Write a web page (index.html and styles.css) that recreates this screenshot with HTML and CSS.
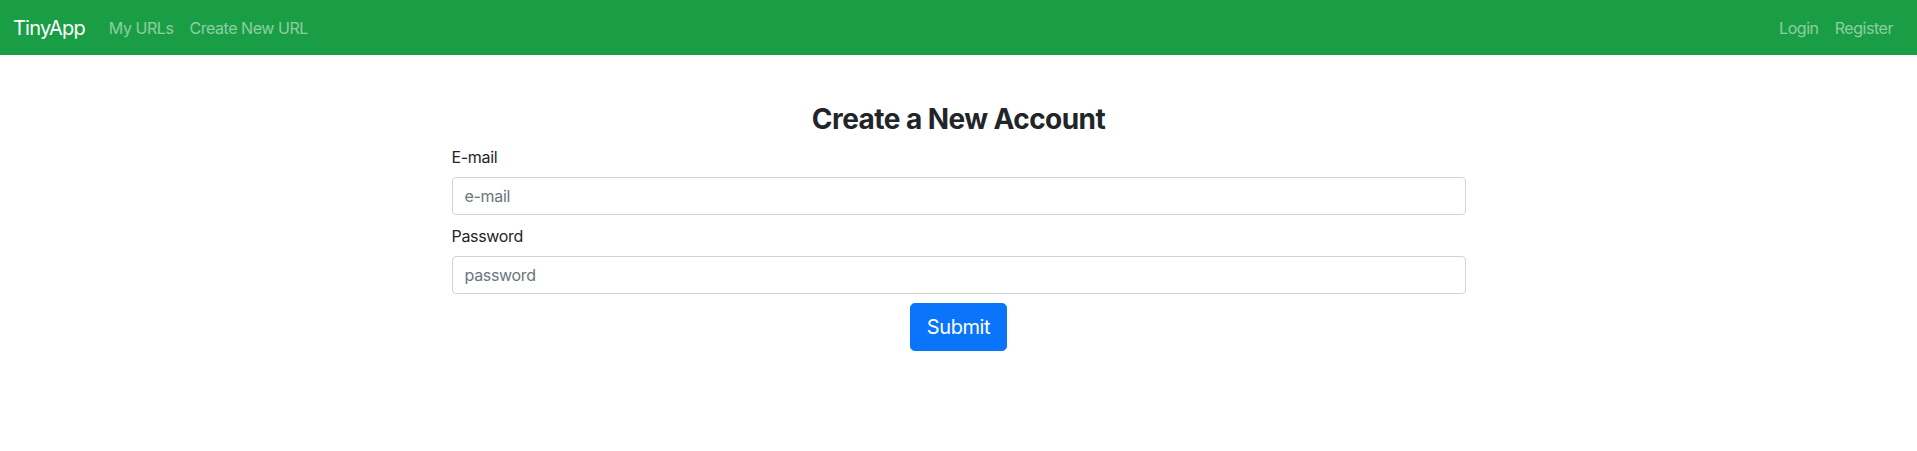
FILE: index.html
```html
<!DOCTYPE html>
<html lang="en">
<head>
<meta charset="utf-8">
<title>TinyApp</title>
<link rel="stylesheet" href="styles.css">
</head>
<body>
<nav class="navbar">
  <a class="brand" href="#">TinyApp</a>
  <div class="nav-left">
    <a class="nav-link" href="#">My URLs</a>
    <a class="nav-link" href="#">Create New URL</a>
  </div>
  <div class="nav-right">
    <a class="nav-link" href="#">Login</a>
    <a class="nav-link" href="#">Register</a>
  </div>
</nav>
<main class="main">
  <h3 class="title">Create a New Account</h3>
  <form class="form">
    <label class="label" for="email">E-mail</label>
    <input class="control" id="email" type="text" placeholder="e-mail">
    <label class="label" for="password">Password</label>
    <input class="control" id="password" type="password" placeholder="password">
    <div class="actions"><button class="btn" type="button">Submit</button></div>
  </form>
</main>
</body>
</html>
```

FILE: styles.css
```css
* { box-sizing: border-box; }
html, body { margin: 0; padding: 0; background: #fff; }
body {
  font-family: Inter, "Noto Sans", "Liberation Sans", sans-serif;
  font-size: 16px;
  line-height: 1.5;
  letter-spacing: -0.02em;
  color: #212529;
}
.navbar {
  display: flex;
  align-items: center;
  height: 55px;
  padding: 0 16px 0 13px;
  background: #1a9e45;
}
.brand {
  font-size: 20px;
  letter-spacing: -0.8px;
  color: #fff;
  text-decoration: none;
  margin-right: 16px;
  line-height: 30px;
}
.nav-left, .nav-right { display: flex; }
.nav-right { margin-left: auto; }
.nav-link {
  color: rgba(255, 255, 255, 0.5);
  text-decoration: none;
  padding: 8px 8px;
  line-height: 24px;
  letter-spacing: -0.45px;
}
.main {
  display: flex;
  flex-direction: column;
  align-items: center;
  padding-top: 48px;
}
.title {
  margin: 0 0 8px;
  font-size: 28px;
  font-weight: 700;
  line-height: 1.2;
  letter-spacing: -0.55px;
  text-align: center;
  color: #212529;
}
.form {
  width: 1014px;
  display: flex;
  flex-direction: column;
}
.label {
  display: block;
  margin-bottom: 8px;
  color: #212529;
}
.control {
  display: block;
  width: 100%;
  height: 38px;
  padding: 6px 12px;
  font-family: inherit;
  font-size: 16px;
  line-height: 1.5;
  letter-spacing: -0.02em;
  color: #495057;
  background: #fff;
  border: 1px solid #ced4da;
  border-radius: 4px;
  margin-bottom: 9px;
}
.control::placeholder { color: #6c757d; opacity: 1; }
.actions { display: flex; justify-content: center; }
.btn {
  font-family: inherit;
  font-size: 20px;
  line-height: 30px;
  letter-spacing: -0.02em;
  padding: 8px 16px;
  color: #fff;
  background: #0a74fb;
  border: 1px solid #0a74fb;
  border-radius: 4.8px;
  cursor: pointer;
}
```
